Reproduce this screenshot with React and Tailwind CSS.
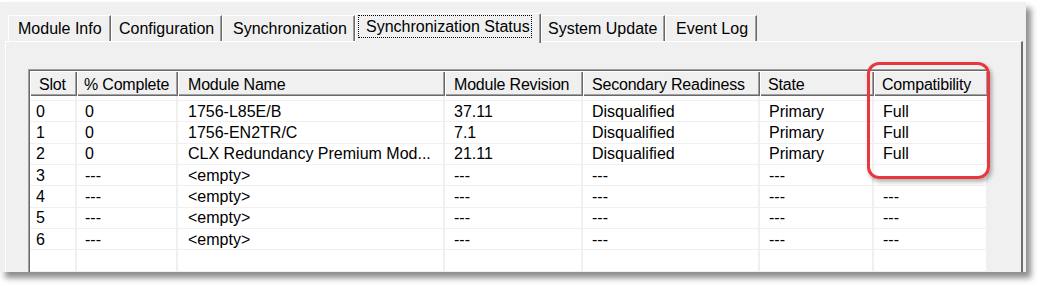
import React from 'react';

const cols = [
  { name: 'Slot', w: 'w-[47px]', hp: 'pl-[9px]', dp: 'pl-[6px]' },
  { name: '% Complete', w: 'w-[101px]', hp: 'pl-[7px]', dp: 'pl-[8px]' },
  { name: 'Module Name', w: 'w-[267px]', hp: 'pl-[10px]', dp: 'pl-[10px]' },
  { name: 'Module Revision', w: 'w-[138px]', hp: 'pl-[9px]', dp: 'pl-[9px]' },
  { name: 'Secondary Readiness', w: 'w-[177px]', hp: 'pl-[9px]', dp: 'pl-[9px]' },
  { name: 'State', w: 'w-[114px]', hp: 'pl-[8px]', dp: 'pl-[9px]' },
  { name: 'Compatibility', w: 'w-[114px]', hp: 'pl-[8px]', dp: 'pl-[9px]' },
];

const rows = [
  ['0', '0', '1756-L85E/B', '37.11', 'Disqualified', 'Primary', 'Full'],
  ['1', '0', '1756-EN2TR/C', '7.1', 'Disqualified', 'Primary', 'Full'],
  ['2', '0', 'CLX Redundancy Premium Mod...', '21.11', 'Disqualified', 'Primary', 'Full'],
  ['3', '---', '<empty>', '---', '---', '---', ''],
  ['4', '---', '<empty>', '---', '---', '---', '---'],
  ['5', '---', '<empty>', '---', '---', '---', '---'],
  ['6', '---', '<empty>', '---', '---', '---', '---'],
  ['', '', '', '', '', '', ''],
  ['', '', '', '', '', '', ''],
];

const tabs = [
  { label: 'Module Info', w: 'w-[103px]', pl: 'pl-[9px]' },
  { label: 'Configuration', w: 'w-[111px]', pl: 'pl-[7px]' },
  { label: 'Synchronization', w: 'w-[133px]', pl: 'pl-[10px]' },
  { label: 'Synchronization Status', w: 'w-[186px]', pl: 'pl-[2px]', active: true },
  { label: 'System Update', w: 'w-[124px]', pl: 'pl-[6px]' },
  { label: 'Event Log', w: 'w-[92px]', pl: 'pl-[10px]' },
];

export default function App() {
  return (
    <div className="relative w-[1045px] h-[286px] bg-white overflow-hidden font-['Liberation_Sans',Arial,sans-serif] text-[16px] text-black">
      <div className="mt-[2px] w-[1026px] h-[270px] bg-[#f0f0f0] shadow-[5px_6px_6px_rgba(0,0,0,0.45)] flex flex-col overflow-hidden">
        {/* tab strip */}
        <div className="h-[39px] pl-[8px] flex items-end shrink-0">
          {tabs.map(t => t.active ? (
            <div key={t.label}
              className={"relative z-10 -mb-[2px] h-[30px] pb-[4px] flex items-center bg-[#f0f0f0] border-l border-t border-white border-r border-r-[#696969] shadow-[inset_-1px_0_0_#a0a0a0] rounded-t-[2px] " + t.w + ' ' + t.pl}>
              <span className="h-[23px] w-[174px] pl-[7px] flex items-center border border-dotted border-black leading-none">{t.label}</span>
            </div>
          ) : (
            <div key={t.label}
              className={"h-[26px] flex items-center bg-[#f0f0f0] border-l border-t border-white border-r border-r-[#696969] shadow-[inset_-1px_0_0_#a0a0a0] rounded-tl-[2px] leading-none " + t.w + ' ' + t.pl}>
              {t.label}
            </div>
          ))}
        </div>

        {/* panel */}
        <div className="flex-1 ml-[5px] mr-[3px] border-t border-l border-white border-r-2 border-r-[#6e6e6e] pt-[27px] pl-[22px] overflow-hidden">
          <div className="w-[960px] h-full border-t border-l border-[#a0a0a0] bg-white">
            <div className="h-full border-t border-l border-[#696969] bg-white">
              {/* header */}
              <div className="flex h-[25px]">
                {cols.map(c => (
                  <div key={c.name}
                    className={"h-full pt-[2px] flex items-center bg-[#f0f0f0] shadow-[inset_1px_1px_0_#ffffff,inset_-1px_-1px_0_#696969,inset_-2px_-2px_0_#a0a0a0] whitespace-nowrap tracking-[-0.2px] " + c.w + ' ' + c.hp}>
                    {c.name}
                  </div>
                ))}
              </div>
              {/* gap above first row */}
              <div className="flex h-[4px]">
                {cols.map(c => <div key={c.name} className={"h-full border-r-2 border-[#f0f0f0] " + c.w} />)}
              </div>
              {rows.map((r, i) => (
                <div key={i} className="flex h-[21.33px] border-t border-[#f0f0f0]">
                  {cols.map((c, j) => (
                    <div key={c.name}
                      className={"h-full pt-[1px] flex items-center border-r-2 border-[#f0f0f0] whitespace-nowrap overflow-hidden " + c.w + ' ' + c.dp}>
                      {r[j]}
                    </div>
                  ))}
                </div>
              ))}
            </div>
          </div>
        </div>
      </div>

      {/* highlight around compatibility column */}
      <div className="absolute left-[867px] top-[62px] w-[123px] h-[117px] border-[3px] border-[#e8383e] rounded-[12px] shadow-[2px_3px_4px_rgba(0,0,0,0.3)]" />
    </div>
  );
}
